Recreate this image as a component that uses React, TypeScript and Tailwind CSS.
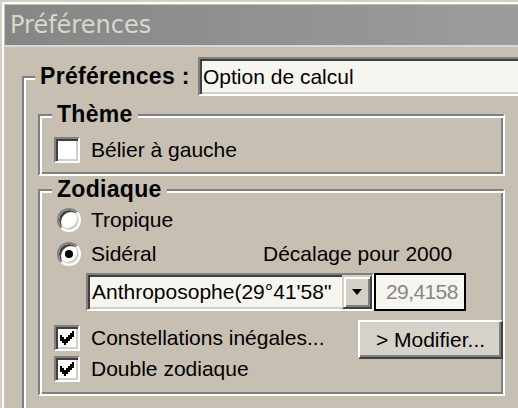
import React from "react";

const SANS = "font-['Liberation_Sans',Arial,sans-serif]";

// classic 3D edges, drawn at 2x
const sunken =
  "border-2 border-t-[#808080] border-l-[#808080] border-r-white border-b-white shadow-[inset_2px_2px_0_#404040,inset_-2px_-2px_0_#d4d0c8]";
const raised =
  "border-2 border-t-[#d4d0c8] border-l-[#d4d0c8] border-r-[#404040] border-b-[#404040] shadow-[inset_2px_2px_0_#fff,inset_-2px_-2px_0_#808080]";
const etched =
  "border-2 border-t-[#808080] border-l-[#808080] border-r-white border-b-white shadow-[inset_2px_2px_0_#fff,inset_-2px_-2px_0_#808080]";

const CHECK = [
  "......X",
  ".....XX",
  "X...XXX",
  "XX.XXX.",
  "XXXXX..",
  ".XXX...",
  "..X....",
];

const CheckBox = ({ checked }: { checked?: boolean }) => (
  <div
    className={`w-[26px] h-[26px] bg-white flex items-center justify-center shrink-0 ${sunken}`}
  >
    {checked && (
      <svg width="14" height="14" viewBox="0 0 7 7" shapeRendering="crispEdges">
        {CHECK.map((row, y) =>
          row.split("").map((c, x) =>
            c === "X" ? <rect key={`${x}-${y}`} x={x} y={y} width="1" height="1" fill="#000" /> : null
          )
        )}
      </svg>
    )}
  </div>
);

const Radio = ({ checked }: { checked?: boolean }) => (
  <div
    className={`w-[24px] h-[24px] rounded-full bg-white flex items-center justify-center shrink-0 ${sunken}`}
  >
    {checked && <div className="w-[8px] h-[8px] rounded-full bg-black" />}
  </div>
);

const Group: React.FC<{ label: string; className?: string; children: React.ReactNode }> = ({
  label,
  className = "",
  children,
}) => (
  <fieldset className={`m-0 p-0 min-w-0 ${etched} ${className}`}>
    <legend className="ml-[12px] px-[5px] bg-[#c7bfb1] font-bold text-[23px] leading-[23px] tracking-[0.3px]">
      {label}
    </legend>
    {children}
  </fieldset>
);

export default function App() {
  return (
    <div
      className={`w-[518px] h-[408px] overflow-hidden bg-[#c7bfb1] border-l-2 border-t-2 border-[#d4d0c8] text-black ${SANS}`}
    >
      <div className="h-full border-l-2 border-t-2 border-white pl-[1px] pt-[1px]">
        {/* title bar */}
        <div className="h-[42px] border-b-2 border-[#dcd8d0] bg-linear-to-r from-[#868686] to-[#9c9c9c] flex items-center pl-[5px]">
          <span className="font-['DejaVu_Sans',sans-serif] text-[24px] leading-none text-[#dad6ce]">
            Préférences
          </span>
        </div>

        <div className="pt-[10px]">
          <fieldset className={`m-0 p-0 ml-[17px] w-[560px] h-[400px] ${etched}`}>
            <legend className="ml-[11px] pl-[5px] bg-[#c7bfb1] flex items-center">
              <span className="w-[158px] font-bold text-[23px] leading-[23px] tracking-[0.3px] whitespace-nowrap">
                Préférences :
              </span>
              <div
                className={`w-[340px] h-[39px] bg-[#f7f5f0] flex items-center pl-[3px] text-[21px] whitespace-nowrap ${sunken}`}
              >
                Option de calcul
              </div>
            </legend>

            <div className="pl-[14px] pt-[7px]">
              <Group label="Thème" className="w-[467px]">
                <div className="pt-[11px] pb-[11px] pl-[14px] flex items-center">
                  <CheckBox />
                  <span className="ml-[11px] text-[21px] leading-[26px]">Bélier à gauche</span>
                </div>
              </Group>

              <Group label="Zodiaque" className="w-[467px] mt-[2px]">
                <div className="pt-[6px] pb-[12px] text-[21px]">
                  <div className="h-[26px] flex items-center pl-[17px]">
                    <Radio />
                    <span className="ml-[10px]">Tropique</span>
                  </div>
                  <div className="h-[26px] mt-[8px] flex items-center pl-[17px]">
                    <div className="w-[206px] flex items-center">
                      <Radio checked />
                      <span className="ml-[10px]">Sidéral</span>
                    </div>
                    <span className="whitespace-nowrap">Décalage pour 2000</span>
                  </div>

                  <div className="mt-[6px] pl-[46px] flex items-center">
                    <div className={`w-[288px] h-[38px] bg-[#f7f5f0] flex ${sunken}`}>
                      <div className="flex-1 min-w-0 overflow-hidden whitespace-nowrap pl-[4px] flex items-center">
                        Anthroposophe(29°41'58"
                      </div>
                      <div className={`w-[30px] h-full bg-[#d4d0c8] flex items-center justify-center shrink-0 ${raised}`}>
                        <svg width="10" height="6" viewBox="0 0 10 6">
                          <path d="M0 0H10L5 6Z" fill="#000" />
                        </svg>
                      </div>
                    </div>
                    <div className="w-[92px] h-[38px] border-2 border-black bg-[#f7f5f0] text-[#858585] flex items-center pl-[10px] tracking-[-0.6px] whitespace-nowrap overflow-hidden">
                      29,4158
                    </div>
                  </div>

                  <div className="mt-[9px] flex items-start">
                    <div className="w-[318px] pl-[14px] pt-[5px]">
                      <div className="h-[26px] flex items-center">
                        <CheckBox checked />
                        <span className="ml-[11px] whitespace-nowrap">Constellations inégales...</span>
                      </div>
                      <div className="h-[26px] mt-[5px] flex items-center">
                        <CheckBox checked />
                        <span className="ml-[11px] whitespace-nowrap">Double zodiaque</span>
                      </div>
                    </div>
                    <div
                      className="w-[145px] h-[39px] bg-[#d6d2ca] border-2 border-t-white border-l-white border-r-[#404040] border-b-[#404040] shadow-[inset_-2px_-2px_0_#808080] flex items-center justify-center whitespace-nowrap"
                    >
                      &gt; Modifier...
                    </div>
                  </div>
                </div>
              </Group>
            </div>
          </fieldset>
        </div>
      </div>
    </div>
  );
}
